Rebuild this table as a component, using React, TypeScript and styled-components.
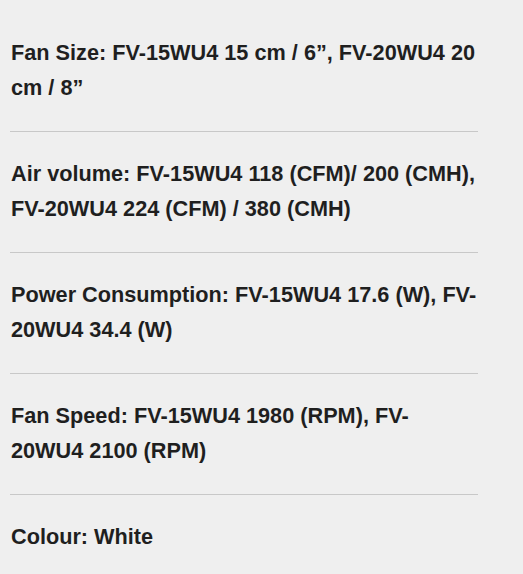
import React from 'react';
import styled, { createGlobalStyle } from 'styled-components';

const GlobalStyle = createGlobalStyle`
  html, body {
    margin: 0;
    padding: 0;
    background: #efefef;
  }
  body {
    font-family: "Liberation Sans", Arial, Helvetica, sans-serif;
  }
`;

const SpecList = styled.ul`
  list-style: none;
  margin: 0;
  padding: 11px 0 0 10px;
  width: 468px;
`;

const SpecItem = styled.li`
  padding: 24px 0 26px 1px;
  border-bottom: 1px solid #c8c8c8;
  color: #1f1f1f;
  font-size: 21.7px;
  font-weight: 700;
  line-height: 35px;

  &:last-child {
    border-bottom: none;
  }
`;

const specs: string[] = [
  'Fan Size: FV-15WU4 15 cm / 6\u201d, FV-20WU4 20 cm / 8\u201d',
  'Air volume: FV-15WU4 118 (CFM)/ 200 (CMH), FV-20WU4 224 (CFM) / 380 (CMH)',
  'Power Consumption: FV-15WU4 17.6 (W), FV-20WU4 34.4 (W)',
  'Fan Speed: FV-15WU4 1980 (RPM), FV-20WU4 2100 (RPM)',
  'Colour: White'
];

export default function App(): JSX.Element {
  return (
    <>
      <GlobalStyle />
      <SpecList>
        {specs.map((s) => (
          <SpecItem key={s}>{s}</SpecItem>
        ))}
      </SpecList>
    </>
  );
}
